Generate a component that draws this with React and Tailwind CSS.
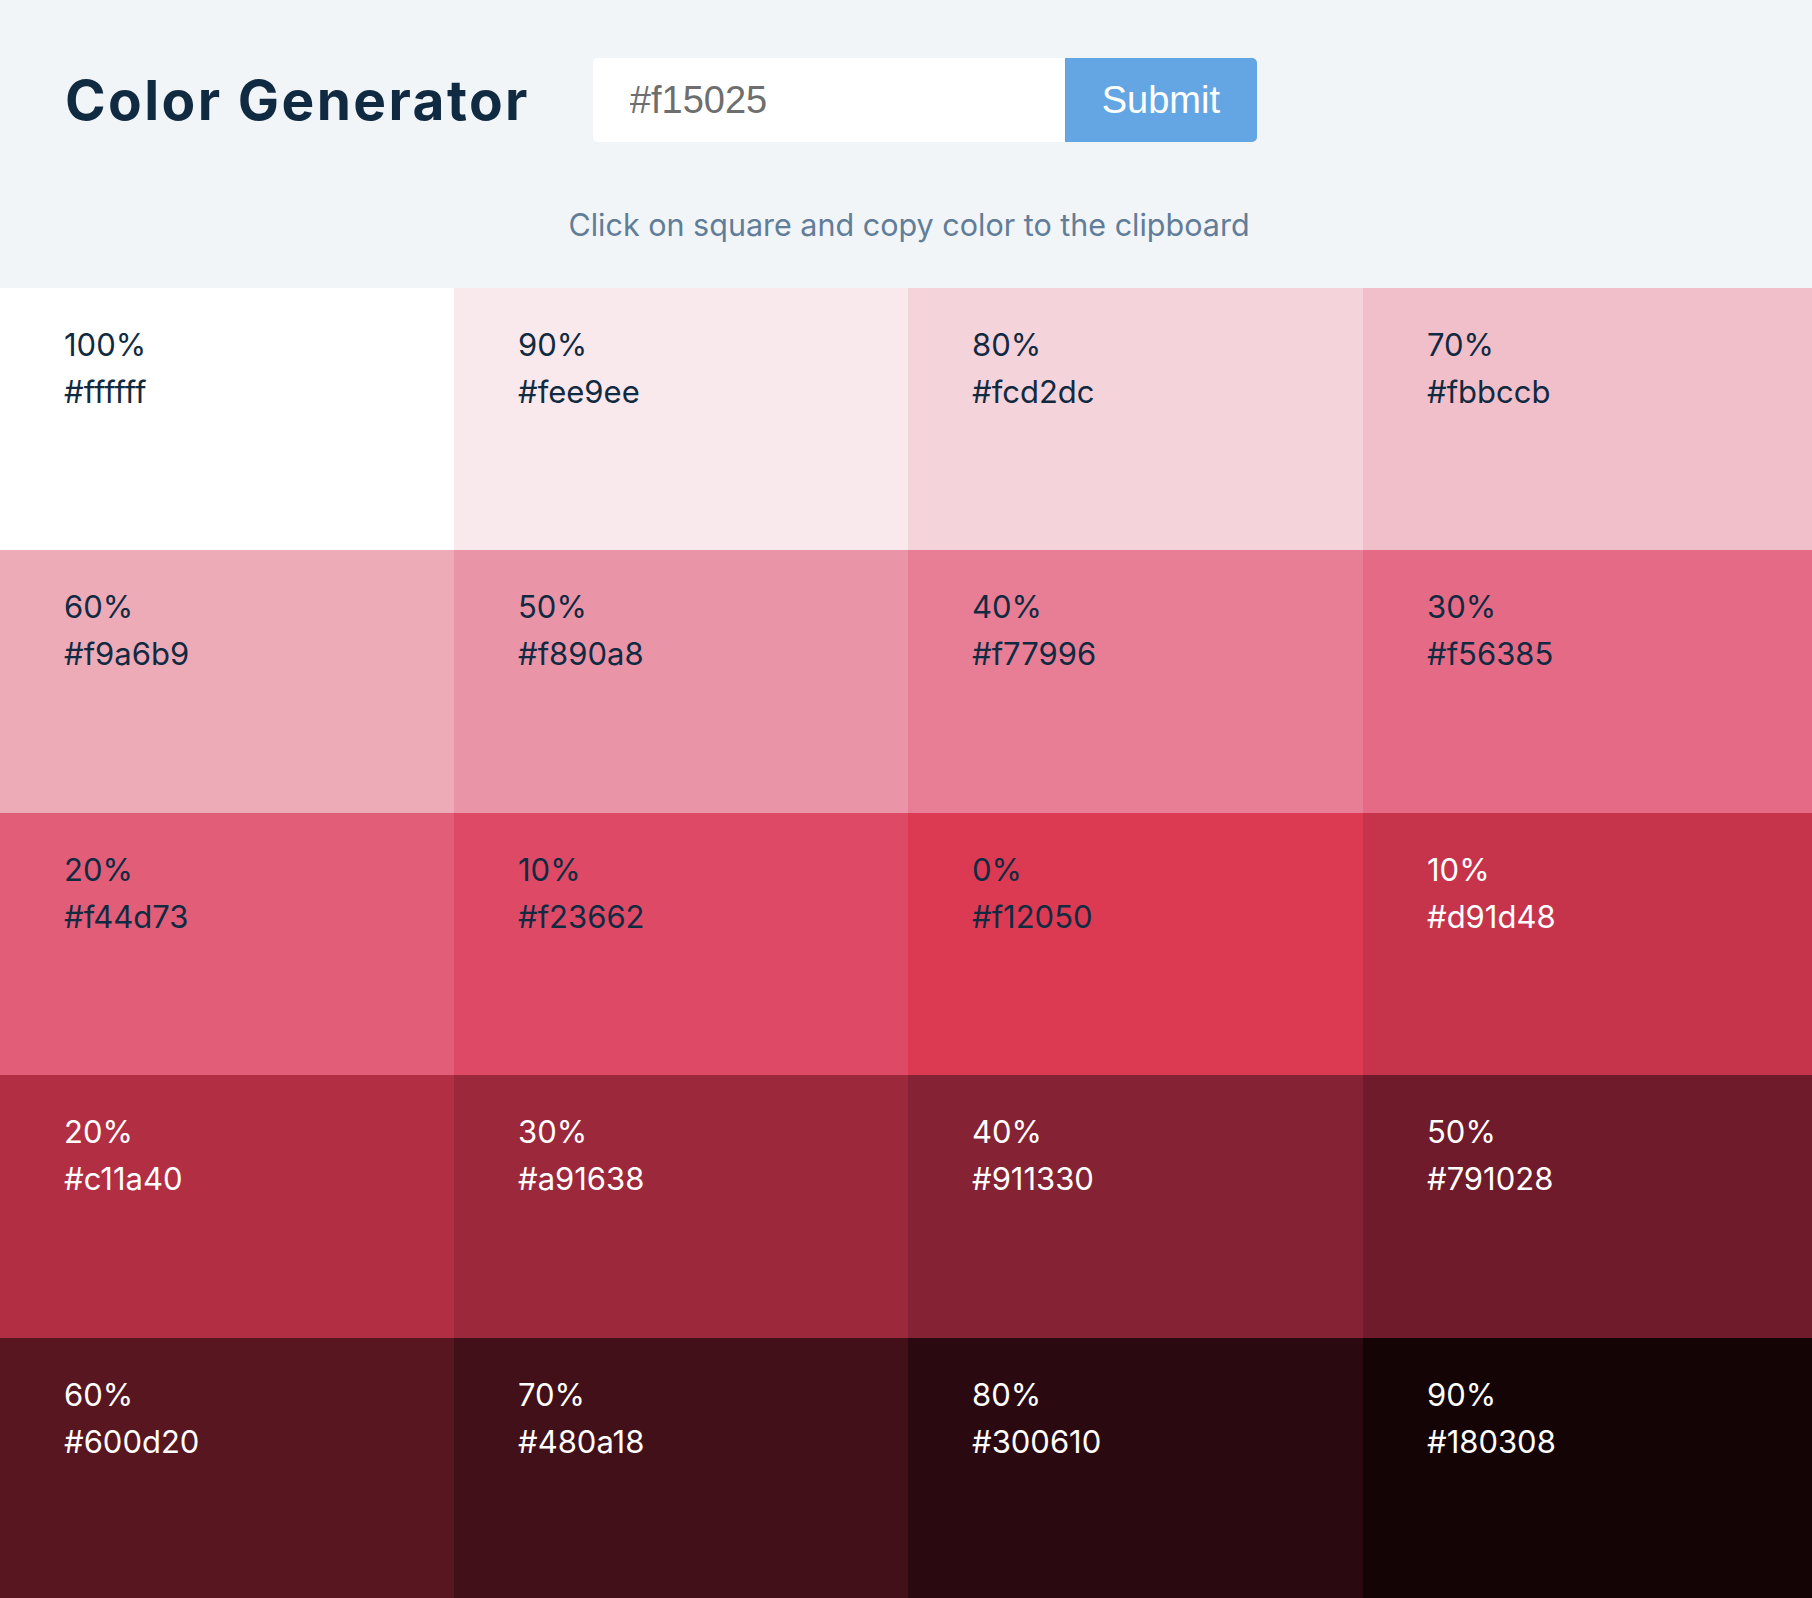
import { useState } from 'react'

// tints, base, shades — bg is the colour as it shows on screen, hex is the label
const SWATCHES = [
  { w: '100%', hex: '#ffffff', bg: '#ffffff' },
  { w: '90%', hex: '#fee9ee', bg: '#f9e8ec' },
  { w: '80%', hex: '#fcd2dc', bg: '#f5d3da' },
  { w: '70%', hex: '#fbbccb', bg: '#f1bfc9' },
  { w: '60%', hex: '#f9a6b9', bg: '#edabb8' },
  { w: '50%', hex: '#f890a8', bg: '#ea94a8' },
  { w: '40%', hex: '#f77996', bg: '#e77e95' },
  { w: '30%', hex: '#f56385', bg: '#e56a85' },
  { w: '20%', hex: '#f44d73', bg: '#e25d77' },
  { w: '10%', hex: '#f23662', bg: '#de4966' },
  { w: '0%', hex: '#f12050', bg: '#dc3a52' },
  { w: '10%', hex: '#d91d48', bg: '#c6344b', dark: true },
  { w: '20%', hex: '#c11a40', bg: '#b22e43', dark: true },
  { w: '30%', hex: '#a91638', bg: '#9c283b', dark: true },
  { w: '40%', hex: '#911330', bg: '#852233', dark: true },
  { w: '50%', hex: '#791028', bg: '#6f1b2b', dark: true },
  { w: '60%', hex: '#600d20', bg: '#581621', dark: true },
  { w: '70%', hex: '#480a18', bg: '#421019', dark: true },
  { w: '80%', hex: '#300610', bg: '#2b0910', dark: true },
  { w: '90%', hex: '#180308', bg: '#150406', dark: true },
]

const Swatch = ({ item }) => {
  const [copied, setCopied] = useState(false)

  const handleClick = () => {
    setCopied(true)
    navigator.clipboard?.writeText(item.hex).catch(() => {})
    setTimeout(() => setCopied(false), 2000)
  }

  return (
    <article
      onClick={handleClick}
      className={`h-[262.4px] pl-[64px] pt-[33px] cursor-pointer text-[31px] leading-[47px] font-['Inter',sans-serif] ${
        item.dark ? 'text-white' : 'text-[#102a42]'
      }`}
      style={{ backgroundColor: item.bg }}
    >
      <p>{item.w}</p>
      <p>{item.hex}</p>
      {copied && <p className="text-[20px] uppercase mt-2">copied to clipboard</p>}
    </article>
  )
}

export default function App() {
  const [color, setColor] = useState('#f15025')

  return (
    <main className="min-h-screen bg-[#f1f5f8]">
      <section className="pt-[58px] pb-[43px]">
        <div className="flex items-center pl-[65px] gap-[63px]">
          <h1 className="text-[55px] font-bold tracking-[2.4px] text-[#102a42] font-['Inter',sans-serif] leading-none">
            Color Generator
          </h1>
          <form className="flex h-[84px]" onSubmit={(e) => e.preventDefault()}>
            <input
              type="text"
              value={color}
              onChange={(e) => setColor(e.target.value)}
              className="w-[472px] h-full bg-white rounded-l-[5px] pl-[37px] text-[38px] text-[#6e6e6e] font-['Liberation_Sans',Arial,sans-serif] outline-none"
            />
            <button
              type="submit"
              className="w-[192px] h-full bg-[#64a6e3] rounded-r-[5px] text-white text-[38px] font-['Liberation_Sans',Arial,sans-serif]"
            >
              Submit
            </button>
          </form>
        </div>
        <p className="mt-[63px] pl-[6px] text-center text-[30.5px] leading-[40px] text-[#617d98] font-['Inter',sans-serif]">
          Click on square and copy color to the clipboard
        </p>
      </section>
      <section className="grid grid-cols-[454px_454px_455px_1fr]">
        {SWATCHES.map((item, index) => (
          <Swatch key={index} item={item} />
        ))}
      </section>
    </main>
  )
}
